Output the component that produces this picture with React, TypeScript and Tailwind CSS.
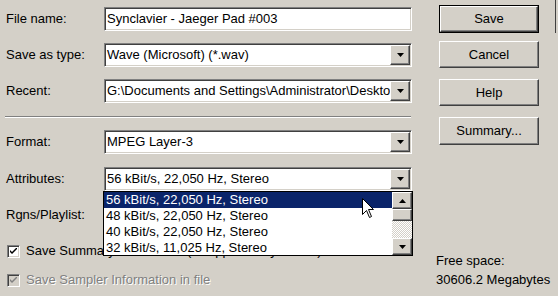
import React from "react";

const raised =
  "border border-t-white border-l-white border-r-[#404040] border-b-[#404040] shadow-[inset_-1px_-1px_0_#808080,inset_1px_1px_0_#d4d0c8]";
const sunken =
  "border border-t-[#808080] border-l-[#808080] border-r-white border-b-white shadow-[inset_1px_1px_0_#404040,inset_-1px_-1px_0_#d4d0c8]";

function Arrow({ up }: { up?: boolean }) {
  return (
    <svg width="7" height="4" viewBox="0 0 7 4">
      {up ? <path d="M3.5 0 L7 4 L0 4 Z" fill="#000" /> : <path d="M0 0 L7 0 L3.5 4 Z" fill="#000" />}
    </svg>
  );
}

function Field({ value, combo }: { value: string; combo?: boolean }) {
  return (
    <div className={`${sunken} bg-white w-[308px] h-[24px] flex items-stretch p-px`}>
      <div className="flex-1 overflow-hidden whitespace-nowrap pl-[1px] leading-[20px]">{value}</div>
      {combo && (
        <div className={`${raised} bg-[#d4d0c8] w-[20px] flex items-center justify-center`}>
          <Arrow />
        </div>
      )}
    </div>
  );
}

function Row({ label, children, className = "" }: { label: string; children?: React.ReactNode; className?: string }) {
  return (
    <div className={`flex items-center h-[24px] ${className}`}>
      <div className="w-[98px] whitespace-nowrap">{label}</div>
      {children}
    </div>
  );
}

function Check({ disabled }: { disabled?: boolean }) {
  return (
    <div className={`${sunken} w-[13px] h-[13px] flex items-center justify-center ${disabled ? "bg-[#d4d0c8]" : "bg-white"}`}>
      <svg width="7" height="7" viewBox="0 0 7 7">
        <path d="M0 2 L0 4 L2 6 L7 1 L7 -1 L2 4 Z" fill={disabled ? "#808080" : "#000"} />
      </svg>
    </div>
  );
}

function Button({ label, isDefault, className = "" }: { label: string; isDefault?: boolean; className?: string }) {
  if (isDefault) {
    return (
      <div className={`border border-black w-[100px] h-[28px] flex ${className}`}>
        <div className={`${raised} flex-1 flex items-center justify-center`}>{label}</div>
      </div>
    );
  }
  return (
    <div className={`${raised} w-[100px] h-[27px] flex items-center justify-center ${className}`}>{label}</div>
  );
}

const options = [
  "56 kBit/s, 22,050 Hz, Stereo",
  "48 kBit/s, 22,050 Hz, Stereo",
  "40 kBit/s, 22,050 Hz, Stereo",
  "32 kBit/s, 11,025 Hz, Stereo",
];

export default function App() {
  return (
    <div className="relative w-[558px] h-[296px] bg-[#d4d0c8] overflow-hidden text-[13px] text-black font-['Liberation_Sans',Arial,sans-serif] flex">
      {/* left side */}
      <div className="w-[413px] pl-[6px] pt-[7px] flex flex-col">
        <Row label="File name:">
          <Field value="Synclavier - Jaeger Pad #003" />
        </Row>
        <Row label="Save as type:" className="mt-[12px]">
          <Field value="Wave (Microsoft) (*.wav)" combo />
        </Row>
        <Row label="Recent:" className="mt-[12px]">
          <Field value="G:\Documents and Settings\Administrator\Desktop\Samples" combo />
        </Row>

        <div className="mt-[13px] -ml-[1px] w-[406px] h-[2px] border-t border-t-[#808080] border-b border-b-white" />

        <Row label="Format:" className="mt-[12px]">
          <Field value="MPEG Layer-3" combo />
        </Row>
        <Row label="Attributes:" className="mt-[13px]">
          <Field value="56 kBit/s, 22,050 Hz, Stereo" combo />
        </Row>
        <Row label="Rgns/Playlist:" className="mt-[12px]">
          <Field value="" combo />
        </Row>

        <div className="mt-[16px] ml-[1px] flex items-center h-[16px] gap-[6px] whitespace-nowrap">
          <Check />
          <span>Save Summary Information (if supported by format)</span>
        </div>
        <div className="mt-[13px] ml-[1px] flex items-center h-[16px] gap-[6px] whitespace-nowrap">
          <Check disabled />
          <span className="text-[#808080] [text-shadow:1px_1px_0_#fff]">Save Sampler Information in file</span>
        </div>
      </div>

      {/* right side */}
      <div className="ml-[26px] flex flex-col">
        <Button label="Save" isDefault className="mt-[5px]" />
        <Button label="Cancel" className="mt-[8px]" />
        <Button label="Help" className="mt-[11px]" />
        <Button label="Summary..." className="mt-[11px] h-[28px]" />
        <div className="mt-[106px] -ml-[3px] leading-[19px] whitespace-nowrap">
          <div>Free space:</div>
          <div>30606.2 Megabytes</div>
        </div>
      </div>

      {/* window edge */}
      <div className="absolute top-0 right-[2px] w-px h-[33px] bg-[#404040]" />

      {/* open dropdown list */}
      <div className="absolute left-[103px] top-[191px] w-[310px] h-[65px] border border-black bg-white flex">
        <div className="flex-1 flex flex-col">
          {options.map((o, i) => (
            <div
              key={o}
              className={`h-[16px] leading-[16px] pl-[2px] whitespace-nowrap ${i === 0 ? "bg-[#0a246a] text-white" : ""}`}
            >
              {o}
            </div>
          ))}
        </div>
        <div className="w-[20px] flex flex-col">
          <div className={`${raised} bg-[#d4d0c8] h-[17px] flex items-center justify-center`}>
            <Arrow up />
          </div>
          <div className={`${raised} bg-[#d4d0c8] h-[12px]`} />
          <div className="flex-1 bg-[repeating-conic-gradient(#ffffff_0_25%,#d4d0c8_0_50%)] bg-size-[2px_2px]" />
          <div className={`${raised} bg-[#d4d0c8] h-[17px] flex items-center justify-center`}>
            <Arrow />
          </div>
        </div>
      </div>

      {/* mouse pointer */}
      <svg className="absolute left-[362px] top-[198px]" width="13" height="21" viewBox="0 0 13 21">
        <path d="M0.5 0.5 L0.5 16.5 L4.5 12.5 L7.5 19.5 L9.5 18.5 L6.5 11.5 L11.5 11.5 Z" fill="#fff" stroke="#000" strokeWidth="1" />
      </svg>
    </div>
  );
}
